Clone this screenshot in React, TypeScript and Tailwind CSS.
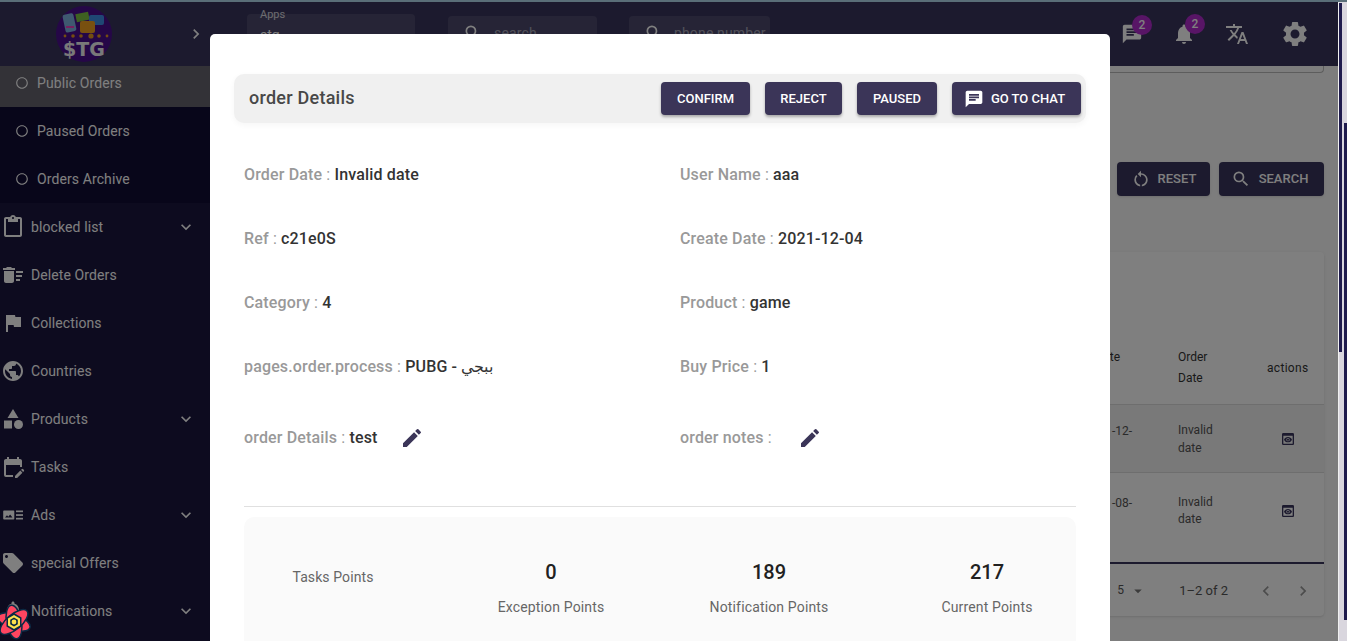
import { ReactNode } from "react"
import {
  MdOutlineContentPaste,
  MdDeleteSweep,
  MdFlag,
  MdPublic,
  MdCategory,
  MdEditCalendar,
  MdLocalOffer,
  MdNotifications,
  MdExpandMore,
  MdChevronRight,
  MdChevronLeft,
  MdRadioButtonUnchecked,
  MdSearch,
  MdChat,
  MdTranslate,
  MdSettings,
  MdEdit,
  MdRestartAlt,
  MdArrowDropDown,
  MdPreview,
} from "react-icons/md"

function AdsIcon() {
  return (
    <svg width="20" height="20" viewBox="0 0 20 20" fill="currentColor">
      <path d="M1 5.5h9.5a.8.8 0 0 1 .8.8v7.4a.8.8 0 0 1-.8.8H1a.8.8 0 0 1-.8-.8V6.300a.8.8 0 0 1 .8-.8zm1 7h7.500l-2.400-3-1.800 2.200-1.300-1.400z" fillRule="evenodd" />
      <rect x="13" y="5.500" width="7" height="1.700" />
      <rect x="13" y="9.200" width="7" height="1.700" />
      <rect x="13" y="12.800" width="7" height="1.700" />
    </svg>
  )
}

const menu = [
  { label: "blocked list", icon: <MdOutlineContentPaste size={24} />, more: true },
  { label: "Delete Orders", icon: <MdDeleteSweep size={24} /> },
  { label: "Collections", icon: <MdFlag size={24} /> },
  { label: "Countries", icon: <MdPublic size={24} /> },
  { label: "Products", icon: <MdCategory size={24} />, more: true },
  { label: "Tasks", icon: <MdEditCalendar size={24} /> },
  { label: "Ads", icon: <AdsIcon />, more: true },
  { label: "special Offers", icon: <MdLocalOffer size={24} /> },
  { label: "Notifications", icon: <MdNotifications size={24} />, more: true },
]

const details = [
  ["Order Date", "Invalid date", "User Name", "aaa"],
  ["Ref", "c21e0S", "Create Date", "2021-12-04"],
  ["Category", "4", "Product", "game"],
  ["pages.order.process", "PUBG - ببجي", "Buy Price", "1"],
]

function Logo() {
  return (
    <svg width="56" height="56" viewBox="0 0 56 56" className="ml-[56px] shrink-0">
      <circle cx="28" cy="28" r="28" fill="#4b0f8f" />
      <rect x="8" y="8" width="11" height="18" rx="2" fill="#7fb2e0" transform="rotate(-12 13 17)" />
      <rect x="10" y="20" width="8" height="2" fill="#f040c0" />
      <rect x="20" y="7" width="13" height="8" fill="#7cc242" transform="rotate(-12 26 11)" />
      <rect x="33" y="9" width="15" height="10" rx="2" fill="#3f8fe8" />
      <rect x="24" y="15" width="15" height="12" rx="2" fill="#f0a020" />
      <g fill="#e89a20">
        <circle cx="17" cy="30" r="1.800" />
        <circle cx="25" cy="30" r="1.800" />
        <circle cx="35" cy="30" r="2.600" />
        <circle cx="43" cy="30" r="1.800" />
        <circle cx="51" cy="30" r="1.400" />
        <circle cx="9" cy="30" r="1.400" />
      </g>
      <text x="28" y="50" textAnchor="middle" fontFamily="'DejaVu Sans', sans-serif" fontWeight="700" fontSize="19" fill="#f2f2f2">
        $TG
      </text>
    </svg>
  )
}

// floating devtools badge sitting at the bottom-left corner
function DevtoolsIcon() {
  return (
    <svg width="34" height="38" viewBox="0 0 34 38" className="absolute bottom-0 left-0">
      <g fill="#ff4560" stroke="#0b2a44" strokeWidth="1.500">
        <ellipse cx="14" cy="19" rx="17" ry="7.500" transform="rotate(20 14 19)" />
        <ellipse cx="14" cy="19" rx="17" ry="7.500" transform="rotate(80 14 19)" />
        <ellipse cx="14" cy="19" rx="17" ry="7.500" transform="rotate(140 14 19)" />
      </g>
      <polygon points="14,10 21.500,14.500 21.500,23.500 14,28 6.500,23.500 6.500,14.500" fill="#0b2a44" />
      <polygon points="14,12 20,15.500 20,22.500 14,26 8,22.500 8,15.500" fill="#ffe14d" />
      <polygon points="14,14.500 17.800,16.800 17.800,21.200 14,23.500 10.200,21.200 10.200,16.800" fill="#0b2a44" />
      <circle cx="14" cy="19" r="2.400" fill="#ffe14d" />
    </svg>
  )
}

function Badge({ children, className }: { children: ReactNode; className: string }) {
  return (
    <span className={`absolute -top-[8px] flex h-5 w-5 items-center justify-center rounded-full bg-[#b02acc] text-xs font-medium text-white ${className}`}>
      {children}
    </span>
  )
}

function Field({ label, value }: { label: string; value: string }) {
  return (
    <div className="text-base font-medium tracking-[0.15px] text-[#999]">
      {label} <span className="font-normal">:</span> <span className="text-[#333]">{value}</span>
    </div>
  )
}

function Stat({ value, label }: { value: string; label: string }) {
  return (
    <div className="flex flex-col items-center">
      <div className="text-xl leading-[23px] font-medium text-[#212121]">{value}</div>
      <div className="mt-[13px] text-sm leading-5 tracking-[0.15px] text-[#666]">{label}</div>
    </div>
  )
}

function ActionButton({ children }: { children: ReactNode }) {
  return (
    <button className="flex h-[33px] w-full items-center justify-center rounded bg-[#3b3558] text-[13px] font-medium text-white shadow-[0_2px_3px_rgba(0,0,0,0.3)]">
      {children}
    </button>
  )
}

export default function App() {
  return (
    <div className="relative h-[641px] w-[1347px] overflow-hidden bg-[#fafafa] font-['Roboto',sans-serif]">
      <div className="h-[2px] bg-[#b4dcf0]" />
      <div className="flex h-[639px]">
        {/* Sidebar */}
        <aside className="w-[220px] shrink-0 bg-[#1a163e] text-sm tracking-[0.1px] text-white">
          <div className="flex h-[64px] items-center bg-[#38345c] pr-[14px]">
            <Logo />
            <MdChevronRight size={20} className="ml-auto text-white" />
          </div>
          <div className="flex h-[41px] items-center bg-[#66646f] pb-[7px] pl-[15px]">
            <MdRadioButtonUnchecked size={14} className="mr-2" />
            Public Orders
          </div>
          <div className="bg-[#100c34]">
            <div className="flex h-[48px] items-center pl-[15px]">
              <MdRadioButtonUnchecked size={14} className="mr-2" />
              Paused Orders
            </div>
            <div className="flex h-[48px] items-center pl-[15px]">
              <MdRadioButtonUnchecked size={14} className="mr-2" />
              Orders Archive
            </div>
          </div>
          {menu.map((m) => (
            <div key={m.label} className="flex h-[48px] items-center pl-[1px]">
              <span className="mr-[6px] flex w-6 justify-center">{m.icon}</span>
              {m.label}
              {m.more && <MdExpandMore size={20} className="mr-[24px] ml-auto" />}
            </div>
          ))}
        </aside>

        {/* Main page behind the dialog */}
        <main className="relative min-w-0 flex-1">
          <header className="flex h-[64px] items-center bg-[#38345c] pr-[28px] pl-[27px]">
            <div className="relative h-10 w-[168px] rounded bg-white/10 pt-[11px] pl-[13px] text-sm text-white">
              <span className="absolute -top-[7px] left-[13px] text-[11px] text-white/80">Apps</span>
              stg
              <MdArrowDropDown size={20} className="absolute top-[12px] right-[8px]" />
            </div>
            <div className="ml-[33px] flex h-[36px] w-[149px] items-start gap-[3px] rounded bg-white/10 pt-[7px] pl-[15px] text-sm tracking-[0.15px] text-white/50">
              <MdSearch size={20} className="mr-2 text-white" />
              search
            </div>
            <div className="ml-[32px] flex h-[36px] w-[141px] items-start gap-[2px] rounded bg-white/10 pt-[7px] pl-[15px] text-sm tracking-[0.15px] text-white/50">
              <MdSearch size={20} className="mr-2 text-white" />
              phone number
            </div>
            <div className="ml-auto flex items-center">
              <span className="relative mr-[29px] text-white">
                <MdChat size={22} />
                <Badge className="left-[11px]">2</Badge>
              </span>
              <span className="relative mr-[29px] text-white">
                <MdNotifications size={24} />
                <Badge className="left-[13px]">2</Badge>
              </span>
              <MdTranslate size={24} className="mr-[31px] text-white" />
              <MdSettings size={30} className="text-white" />
            </div>
          </header>

          <div className="mr-[14px] ml-[16px] h-[7px] rounded-b border border-t-0 border-[#bbb]" />

          <div className="mt-[89px] flex justify-end gap-[9px] pr-[14px]">
            <button className="flex h-[34px] w-[93px] items-center justify-center gap-[7px] rounded bg-[#38345c] text-[13px] font-medium text-white shadow">
              <MdRestartAlt size={20} />
              RESET
            </button>
            <button className="flex h-[34px] w-[105px] items-center justify-center gap-[8px] rounded bg-[#38345c] pr-[4px] text-[13px] font-medium text-white shadow">
              <MdSearch size={20} />
              SEARCH
            </button>
          </div>

          <div className="absolute top-[250px] right-[14px] h-[364px] w-[400px] rounded bg-white shadow">
            <div className="absolute top-[99px] right-[16px] w-[41px] text-xs leading-[34px] tracking-[0.3px] text-[#333]">actions</div>
            <div className="absolute top-[95px] right-[106px] w-[40px] text-xs leading-[21px] text-[#333]">
              Order
              <br />
              Date
            </div>
            <div className="absolute top-[95px] right-[204px] text-xs leading-[21px] text-[#333]">te</div>
            <div className="absolute top-[152px] left-0 h-[69px] w-full border-y border-[#ddd] bg-black/5" />
            <div className="absolute top-[169px] right-[102px] w-[44px] text-xs leading-[18px] text-[#555]">Invalid date</div>
            <div className="absolute top-[242px] right-[102px] w-[44px] text-xs leading-[17px] text-[#555]">Invalid date</div>
            <div className="absolute top-[171px] right-[192px] text-xs text-[#555]">-12-</div>
            <div className="absolute top-[243px] right-[192px] text-xs text-[#555]">-08-</div>
            <MdPreview size={16} className="absolute top-[179px] right-[28px] text-[#38345c]" />
            <MdPreview size={16} className="absolute top-[251px] right-[28px] text-[#38345c]" />
            <div className="absolute top-[310px] left-0 h-[2px] w-full bg-[#38345c]" />
            <div className="absolute top-[330px] right-[200px] text-xs text-[#555]">5</div>
            <MdArrowDropDown size={18} className="absolute top-[330px] right-[177px] text-[#777]" />
            <div className="absolute top-[329px] right-[96px] text-[13px] text-[#555]">1–2 of 2</div>
            <MdChevronLeft size={20} className="absolute top-[329px] right-[48px] text-[#999]" />
            <MdChevronRight size={20} className="absolute top-[329px] right-[11px] text-[#999]" />
          </div>
        </main>

        <div className="w-[9px] shrink-0 bg-[#fafafa]" />
      </div>

      {/* Backdrop */}
      <div className="absolute inset-0 right-[9px] bg-black/50" />
      <div className="absolute top-0 right-0 h-[2px] w-[9px] bg-[#5a6e78]" />

      <DevtoolsIcon />

      {/* Dialog */}
      <div className="absolute top-[34px] left-[210px] h-[607px] w-[900px] overflow-hidden rounded-t-[5px] bg-white">
        <div className="mx-[24px] mt-[40px] flex h-[49px] items-center rounded-[10px] bg-[#f0f0f0] pr-[5px] pl-[15px] shadow-[0_2px_6px_rgba(0,0,0,0.04)]">
          <div className="-mt-[2px] text-lg font-medium tracking-[0.25px] text-[#484848]">order Details</div>
          <div className="ml-auto flex gap-[15px]">
            <div className="w-[89px]"><ActionButton>CONFIRM</ActionButton></div>
            <div className="w-[77px]"><ActionButton>REJECT</ActionButton></div>
            <div className="w-[80px]"><ActionButton>PAUSED</ActionButton></div>
            <div className="w-[129px]">
              <ActionButton>
                <MdChat size={20} className="mr-[7px]" />
                <span className="mr-[4px]">GO TO CHAT</span>
              </ActionButton>
            </div>
          </div>
        </div>

        <div className="mt-[26px] px-[34px]">
          {details.map((row) => (
            <div key={row[0]} className="grid h-[64px] grid-cols-[436px_1fr] pt-[14px]">
              <Field label={row[0]} value={row[1]} />
              <Field label={row[2]} value={row[3]} />
            </div>
          ))}
          <div className="grid h-[96px] grid-cols-[436px_1fr] pt-[21px]">
            <div className="flex items-start">
              <Field label="order Details" value="test" />
              <MdEdit size={24} className="ml-[22px] text-[#3b3558]" />
            </div>
            <div className="flex items-start">
              <Field label="order notes" value="" />
              <MdEdit size={24} className="ml-[26px] text-[#3b3558]" />
            </div>
          </div>
        </div>

        <div className="mx-[34px] mt-[5px] border-t border-[#e0e0e0]" />

        <div className="mx-[34px] mt-[10px] h-[200px] rounded-t-[10px] bg-[#fafafa] pt-[44px]">
          <div className="-ml-[20px] grid w-[872px] grid-cols-4 items-start">
            <div className="pt-[6px] text-center text-sm leading-5 tracking-[0.1px] text-[#666]">Tasks Points</div>
            <Stat value="0" label="Exception Points" />
            <Stat value="189" label="Notification Points" />
            <Stat value="217" label="Current Points" />
          </div>
        </div>
      </div>

      {/* Scrollbars: the inner panel's and the page's */}
      <div className="absolute top-[2px] right-0 flex h-[639px] w-[9px] bg-[#d9d6de]">
        <div className="w-[1px] bg-[#f0f0f0]" />
        <div className="mt-[1px] h-[349px] w-[3px] bg-[#1f1b4d]" />
        <div className="mt-[121px] ml-[2px] h-[497px] w-[3px] bg-[#1f1b4d]" />
      </div>
    </div>
  )
}
